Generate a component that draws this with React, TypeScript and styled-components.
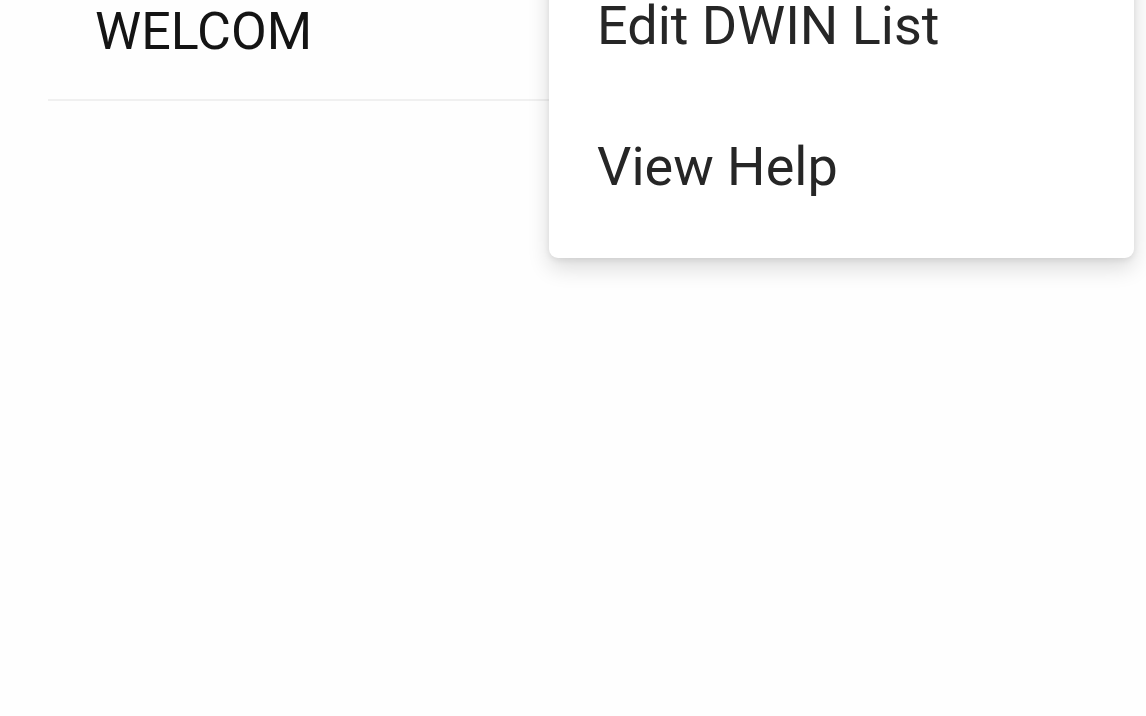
import React from 'react';
import styled, { createGlobalStyle } from 'styled-components';

const GlobalStyle = createGlobalStyle`
  html, body {
    margin: 0;
    padding: 0;
    background: #fff;
  }
`;

const Screen = styled.div`
  position: relative;
  width: 1146px;
  height: 716px;
  overflow: hidden;
  background: #fefefe;
`;

const Header = styled.div`
  display: flex;
  align-items: flex-start;
  margin-left: 48px;
  margin-right: 48px;
  height: 99px;
  padding-left: 47px;
  border-bottom: 2px solid #f0f0f0;
`;

const Title = styled.h1`
  margin: 0;
  padding-top: 1px;
  font-family: Roboto, 'Liberation Sans', Arial, sans-serif;
  font-weight: 400;
  font-size: 52px;
  line-height: 61px;
  color: #141414;
`;

const Menu = styled.ul`
  position: absolute;
  top: -66px;
  left: 549px;
  width: 585px;
  margin: 0;
  padding: 21px 0;
  list-style: none;
  background: #fff;
  border-radius: 9px;
  box-shadow: 0 10px 22px rgba(0, 0, 0, 0.14), 0 2px 6px rgba(0, 0, 0, 0.08);
`;

const MenuItem = styled.li`
  display: flex;
  align-items: center;
  height: 141px;
  padding-left: 48px;
  font-family: Roboto, 'Noto Sans', sans-serif;
  font-size: 54px;
  color: #262626;
`;

const items = ['Edit DWIN List', 'View Help'];

export default function App() {
  return (
    <Screen>
      <GlobalStyle />
      <Header>
        <Title>WELCOM</Title>
      </Header>
      <Menu>
        {items.map((label) => (
          <MenuItem key={label}>{label}</MenuItem>
        ))}
      </Menu>
    </Screen>
  );
}
